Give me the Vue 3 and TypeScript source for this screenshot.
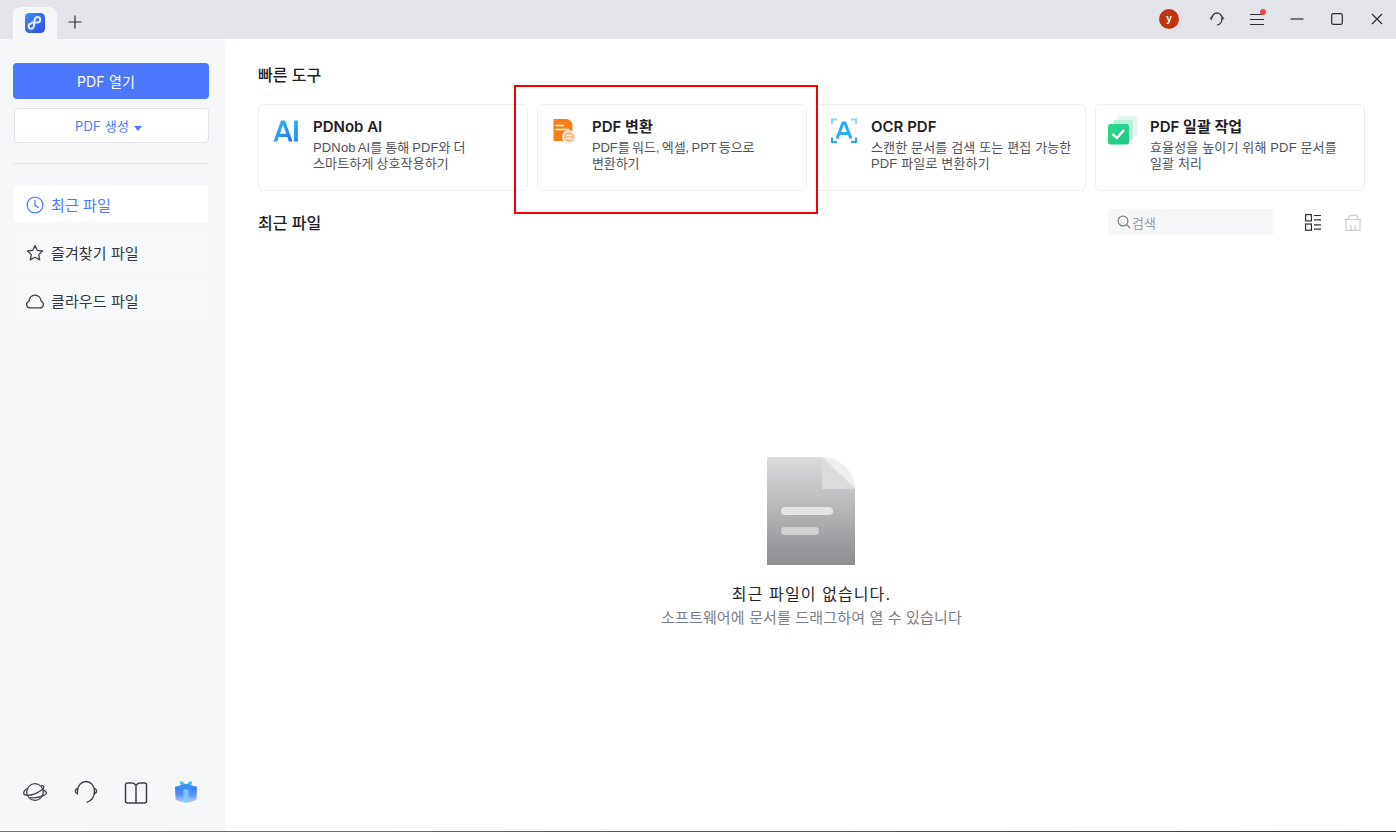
<script setup lang="ts">
interface Tool { title: string; lines: string[]; key: string }
const tools: Tool[] = [
  { key: 'ai', title: 'PDNob AI', lines: ['PDNob AI를 통해 PDF와 더', '스마트하게 상호작용하기'] },
  { key: 'convert', title: 'PDF 변환', lines: ['PDF를 워드, 엑셀, PPT 등으로', '변환하기'] },
  { key: 'ocr', title: 'OCR PDF', lines: ['스캔한 문서를 검색 또는 편집 가능한', 'PDF 파일로 변환하기'] },
  { key: 'batch', title: 'PDF 일괄 작업', lines: ['효율성을 높이기 위해 PDF 문서를', '일괄 처리'] },
]
</script>

<template>
  <div class="app">
    <header class="titlebar">
      <div class="tab">
        <svg width="20" height="20" viewBox="0 0 20 20">
          <defs>
            <linearGradient id="lg" x1="0" y1="0" x2="1" y2="1">
              <stop offset="0" stop-color="#3f8cf8" />
              <stop offset="1" stop-color="#2b4fe0" />
            </linearGradient>
          </defs>
          <rect width="20" height="20" rx="4.5" fill="url(#lg)" />
          <path d="M7 9.5H12.500a2.700 2.700 0 0 0 0-5.400C10.500 4.100 9.800 5.500 9.500 7.500L9 12.500C8.800 14.500 8 15.800 6.300 15.800a2.700 2.700 0 0 1 0-5.400" fill="none" stroke="#e6ecff" stroke-width="2" stroke-linecap="round" />
        </svg>
      </div>
      <svg class="plus" width="14" height="14" viewBox="0 0 14 14"><path d="M7 0.5V13.500M0.500 7H13.500" stroke="#2b2e36" stroke-width="1.200" /></svg>
      <div class="spacer"></div>
      <div class="avatar">y</div>
      <svg class="tb-support" width="16" height="16" viewBox="0 0 16 16" fill="none" stroke="#3a3d45" stroke-width="1.300">
        <path d="M3 7a5 5 0 0 1 10 0" />
        <path d="M13 7c0 4-1.500 6.500-4.800 7" />
        <path d="M2.700 5.500 1 7.300 2.700 9ZM13.300 5.500 15 7.300 13.300 9Z" fill="#3a3d45" stroke-width="0.600" />
      </svg>
      <div class="menu-wrap">
        <svg width="14" height="14" viewBox="0 0 14 14" stroke="#2b2e36" stroke-width="1.100"><path d="M0 2.500H14M0 7.500H14M0 12.500H14" /></svg>
        <span class="dot"></span>
      </div>
      <svg class="win w1" width="14" height="14" viewBox="0 0 14 14"><path d="M0.500 7H13.500" stroke="#2b2e36" stroke-width="1.200" /></svg>
      <svg class="win w2" width="12" height="12" viewBox="0 0 12 12"><rect x="0.700" y="0.700" width="10.600" height="10.600" rx="1.500" fill="none" stroke="#2b2e36" stroke-width="1.200" /></svg>
      <svg class="win w3" width="12" height="12" viewBox="0 0 12 12"><path d="M1 1 11 11M11 1 1 11" stroke="#2b2e36" stroke-width="1.200" /></svg>
    </header>

    <div class="body">
      <aside class="sidebar">
        <button class="btn-open">PDF 열기</button>
        <button class="btn-create">PDF 생성 <i class="caret"></i></button>
        <div class="divider"></div>
        <nav class="nav">
          <a class="nav-item active">
            <svg width="18" height="18" viewBox="0 0 18 18" fill="none" stroke="#4d7bff" stroke-width="1.300"><circle cx="9" cy="9" r="7.900" /><path d="M9 4.500V9.300L12.200 11.400" stroke-linecap="round" /></svg>
            <span>최근 파일</span>
          </a>
          <a class="nav-item">
            <svg width="18" height="18" viewBox="0 0 18 18" fill="none" stroke="#3f424a" stroke-width="1.300" stroke-linejoin="round"><path d="M9 1.600 11.200 6.300 16.500 7 12.700 10.600 13.700 15.900 9 13.300 4.300 15.900 5.300 10.600 1.500 7 6.800 6.300Z" /></svg>
            <span>즐겨찾기 파일</span>
          </a>
          <a class="nav-item">
            <svg width="18" height="18" viewBox="0 0 18 18" fill="none" stroke="#3f424a" stroke-width="1.300"><path d="M4.300 15.900H13.700a3.500 3.500 0 0 0 1.300-6.800 6 6 0 0 0-12 0 3.500 3.500 0 0 0 1.300 6.800Z" /></svg>
            <span>클라우드 파일</span>
          </a>
        </nav>
        <div class="side-foot">
          <svg width="26" height="22" viewBox="0 0 26 22" fill="none" stroke="#3f424a" stroke-width="1.300"><circle cx="13" cy="11" r="8.300" /><path d="M6 7C3 8.800 1.200 11 1.800 12.800c.7 2 5.600 2 11 0s9.800-5.400 8.900-7.400c-.3-.8-1.200-1.200-2.500-1.100" /><path d="M21 8.800c2.400 1 3.700 2.100 3.300 3.300-.6 1.900-5.600 4-10.700 4.600-2 .2-4 .2-5.300-.2" /></svg>
          <svg width="26" height="26" viewBox="0 0 26 26" fill="none" stroke="#3f424a" stroke-width="1.300"><path d="M4.500 12a8.500 9.500 0 0 1 17 0c0 6.500-3 10-8 11.500" /><path d="M4.500 9.300C3 9.800 2.300 10.800 2.300 12S3 14.300 4.500 14.800ZM21.500 9.300C23 9.800 23.700 10.800 23.700 12S23 14.300 21.500 14.800Z" /></svg>
          <svg class="book" width="24" height="22" viewBox="0 0 24 22" fill="none" stroke="#3f424a" stroke-width="1.500"><path d="M12 3.500C11 1.800 9.500 1 8 1H3.500A2 2 0 0 0 1.500 3V19A2 2 0 0 0 3.500 21H20.500A2 2 0 0 0 22.500 19V3A2 2 0 0 0 20.500 1H16C14.500 1 13 1.800 12 3.500V21" /></svg>
          <svg width="26" height="26" viewBox="0 0 26 26">
            <defs>
              <linearGradient id="gift" x1="0" y1="0" x2="0" y2="1">
                <stop offset="0" stop-color="#2472f2" />
                <stop offset="0.600" stop-color="#5f93fa" />
                <stop offset="1" stop-color="#b4cffd" />
              </linearGradient>
            </defs>
            <path d="M13 6.500C10 1.500 6.500 1 7 4.500 7.500 6.500 11 6.500 13 6.500ZM13 6.500C16 1.500 19.500 1 19 4.500 18.500 6.500 15 6.500 13 6.500Z" fill="#43c3f0" />
            <path d="M2 8 13 5 24 8 23.500 20C20 24.500 6 24.500 2.500 20Z" fill="url(#gift)" />
            <path d="M2 8 13 5 24 8 13 11Z" fill="#3a8ff5" />
            <path d="M10.500 10.500 15.500 10.500 15.500 23.500H10.500Z" fill="#7fd0fb" opacity="0.850" />
          </svg>
        </div>
      </aside>

      <main class="main">
        <h2 class="heading quick">빠른 도구</h2>
        <section class="cards">
          <article v-for="t in tools" :key="t.key" class="card" :class="'card-' + t.key">
            <div class="card-icon">
              <svg v-if="t.key === 'ai'" width="26" height="24" viewBox="0 0 26 24">
                <defs>
                  <linearGradient id="ai" x1="0" y1="0" x2="1" y2="1">
                    <stop offset="0" stop-color="#22c8ee" />
                    <stop offset="1" stop-color="#2c6df5" />
                  </linearGradient>
                </defs>
                <path d="M0.500 22.500 8 1.500H12L19.500 22.500H15.800L14.300 18H5.700L4.200 22.500ZM6.800 14.700H13.200L10 5.800Z" fill="url(#ai)" fill-rule="evenodd" />
                <rect x="21" y="1.500" width="3.800" height="21" fill="url(#ai)" />
              </svg>
              <svg v-else-if="t.key === 'convert'" width="24" height="26" viewBox="0 0 24 26">
                <path d="M0.500 0H13C16.500 0 19.500 3 19.500 6.500V22H1.500A1 1 0 0 1 0.500 21Z" fill="#fb7e14" />
                <path d="M2.500 6.500H11M2.500 10.500H16" stroke="#fff" stroke-width="1.300" />
                <circle cx="16" cy="18" r="7" fill="#ececec" />
                <circle cx="16" cy="18" r="5" fill="#f6c089" />
                <path d="M13 16.500H19M19 19.500H13" stroke="#fff" stroke-width="1.100" />
              </svg>
              <svg v-else-if="t.key === 'ocr'" width="26" height="26" viewBox="0 0 26 26" fill="none">
                <path d="M1 6V1.500H6M20 1.500H25V6" stroke="#86d8f8" stroke-width="2" />
                <path d="M1 19.500V24H6M20 24H25V19.500" stroke="#22abee" stroke-width="2" />
                <path d="M6 20.500 12 5H14L20 20.500M8 15.500H18" stroke="#29aef2" stroke-width="3" />
              </svg>
              <svg v-else width="30" height="30" viewBox="0 0 30 30">
                <defs>
                  <linearGradient id="chk" x1="0" y1="0" x2="1" y2="1">
                    <stop offset="0" stop-color="#2bdc93" />
                    <stop offset="1" stop-color="#1fc47f" />
                  </linearGradient>
                </defs>
                <rect x="9" y="0" width="20" height="20" rx="2" fill="#dff7ee" />
                <rect x="5" y="4" width="20" height="20" rx="2" fill="#bdeedd" />
                <rect x="0" y="8" width="21" height="20.500" rx="2.500" fill="url(#chk)" />
                <path d="M4.500 18 8.800 22 16 14" fill="none" stroke="#fff" stroke-width="2.400" />
              </svg>
            </div>
            <div class="card-text">
              <h3>{{ t.title }}</h3>
              <p v-for="l in t.lines" :key="l">{{ l }}</p>
            </div>
          </article>
        </section>

        <div class="recent-row">
          <h2 class="heading recent">최근 파일</h2>
          <div class="spacer"></div>
          <label class="search">
            <svg width="14" height="14" viewBox="0 0 14 14" fill="none" stroke="#7c7f87" stroke-width="1.200"><circle cx="6" cy="6" r="4.900" /><path d="M9.600 9.600 13 13" /></svg>
            <span>검색</span>
          </label>
          <svg class="grid-ic" width="16" height="17" viewBox="0 0 16 17" fill="none" stroke="#2b2e36" stroke-width="1.200"><rect x="0.600" y="0.600" width="5.800" height="6.300" /><rect x="0.600" y="10" width="5.800" height="6.300" /><path d="M9 1.500H16M9 5.800H16M9 10.800H16M9 15.200H16" /></svg>
          <svg class="trash-ic" width="18" height="17" viewBox="0 0 18 17" fill="none" stroke="#ccced3" stroke-width="1.200"><path d="M0.500 5.500H17.500M2 5.500V16.400H16V5.500M4 5.500 5 2 12.500 0.800 14 5.500M7 16.400V11M11 16.400V11" /></svg>
        </div>

        <div class="empty">
          <svg width="88" height="108" viewBox="0 0 88 108">
            <defs>
              <linearGradient id="doc" x1="0" y1="0" x2="0" y2="1">
                <stop offset="0" stop-color="#dcdcdd" />
                <stop offset="1" stop-color="#8d8d92" />
              </linearGradient>
            </defs>
            <path d="M0 0H55C72 0 88 16 88 32V108H0Z" fill="url(#doc)" />
            <path d="M55 0C72 0 88 16 88 32Z" fill="#eeeeef" />
            <path d="M55 0 88 32H55Z" fill="#dbdbdc" />
            <rect x="14" y="50" width="52" height="8" rx="4" fill="#e4e4e6" />
            <rect x="14" y="70" width="38" height="8" rx="4" fill="#d2d2d5" />
          </svg>
          <p class="empty-title">최근 파일이 없습니다.</p>
          <p class="empty-sub">소프트웨어에 문서를 드래그하여 열 수 있습니다</p>
        </div>
      </main>
    </div>
    <div class="edge"></div>
    <div class="highlight"></div>
  </div>
</template>

<style>
html, body { margin: 0; background: #fff; overflow: hidden; }
</style>

<style scoped>
.app {
  position: relative;
  width: 1396px;
  height: 832px;
  display: flex;
  flex-direction: column;
  font-family: Inter, "Noto Sans CJK KR", "Noto Sans", sans-serif;
  color: #24262c;
  overflow: hidden;
}
.edge {
  height: 1px;
  flex: none;
  background: linear-gradient(90deg, #0f96c4 0%, #0f7aa5 50%, #083f80 100%);
}
.titlebar {
  height: 39px;
  flex: none;
  display: flex;
  align-items: center;
  background: #e3e4e9;
  padding-left: 13px;
  box-sizing: border-box;
}
.tab {
  width: 44px;
  height: 32px;
  margin-top: 7px;
  background: #f6f7f9;
  border-radius: 8px 8px 0 0;
  display: flex;
  align-items: flex-start;
  justify-content: center;
  padding-top: 6px;
  box-sizing: border-box;
}
.plus { margin-left: 11px; margin-top: 5px; }
.spacer { flex: 1; }
.avatar {
  width: 20px;
  height: 20px;
  margin-bottom: 1px;
  border-radius: 50%;
  background: #bf3511;
  color: #fff;
  font: 700 10px/19px "Liberation Sans", sans-serif;
  text-align: center;
}
.tb-support { margin-left: 30px; margin-bottom: 1px; }
.menu-wrap { position: relative; width: 14px; height: 14px; margin-left: 25px; margin-bottom: 1px; }
.menu-wrap svg { display: block; }
.dot {
  position: absolute;
  top: -3px;
  right: -2px;
  width: 6px;
  height: 6px;
  border-radius: 50%;
  background: #f4433f;
}
.win { flex: none; margin-bottom: 1px; }
.w1 { margin-left: 26px; }
.w2 { margin-left: 27px; }
.w3 { margin-left: 28px; margin-right: 13px; }

.body { flex: 1; display: flex; min-height: 0; }
.sidebar {
  width: 225px;
  flex: none;
  background: #f6f7f9;
  padding: 24px 16px 0 13px;
  box-sizing: border-box;
  display: flex;
  flex-direction: column;
}
.btn-open {
  height: 36px;
  border: 0;
  border-radius: 4px;
  background: #4c78ff;
  color: #fff;
  font: 14px Inter, "Noto Sans CJK KR", sans-serif;
  letter-spacing: 0.2px;
  padding: 0 10px 0 0;
}
.btn-create {
  height: 35px;
  margin: 9px 0 0 1px;
  border: 1px solid #e1e3ea;
  border-radius: 4px;
  background: #fff;
  color: #4c78ff;
  font: 13px Inter, "Noto Sans CJK KR", sans-serif;
  letter-spacing: 0.2px;
  padding: 0 6px 0 0;
}
.caret {
  display: inline-block;
  width: 0;
  height: 0;
  margin-left: 1px;
  vertical-align: 0;
  border-left: 4px solid transparent;
  border-right: 4px solid transparent;
  border-top: 5px solid #4c78ff;
}
.divider { height: 1px; background: #e3e4e9; margin-top: 20px; }
.nav { margin: 21px 1px 0; display: flex; flex-direction: column; gap: 10px; }
.nav-item {
  height: 38px;
  border-radius: 4px;
  background: #f8f9fb;
  display: flex;
  align-items: center;
  gap: 7px;
  padding-left: 12px;
  font-size: 15px;
  letter-spacing: 0.1px;
  color: #33363d;
}
.nav-item svg { margin-top: 2px; }
.nav-item.active { background: #fff; color: #4c78ff; }
.side-foot {
  margin-top: auto;
  margin-bottom: 25px;
  display: flex;
  align-items: center;
  height: 28px;
  padding-left: 9px;
  gap: 25px;
}
.book { margin-top: 1px; }
.main { flex: 1; padding: 26px 31px 0 33px; display: flex; flex-direction: column; min-width: 0; }
.heading { margin: 0; font-size: 16px; line-height: 20px; font-weight: 500; color: #1d1f24; }
.heading.recent { padding-top: 2px; }
.cards { margin-top: 19px; display: grid; grid-template-columns: repeat(4, 270px); gap: 9px; }
.card {
  height: 87px;
  box-sizing: border-box;
  border: 1px solid #eeeff1;
  border-radius: 5px;
  display: flex;
  padding: 12px 8px 0 14px;
  background: #fff;
}
.card-icon { width: 40px; flex: none; padding-top: 2px; }
.card-icon svg { display: block; }
.card-convert .card-icon { padding-left: 1px; width: 39px; }
.card-ocr .card-icon { padding-top: 1px; }
.card-batch .card-icon { margin-left: -2px; margin-top: -1px; width: 42px; padding-top: 0; }
.card-text h3 { margin: 0 0 3px; font-size: 15px; line-height: 20px; font-weight: 600; color: #1f2127; }
.card-text p {
  margin: 0;
  font-family: "Liberation Sans", "Noto Sans CJK KR", sans-serif;
  font-size: 13px;
  line-height: 16px;
  letter-spacing: 0.15px;
  color: #50535b;
  white-space: nowrap;
}
.card-ai .card-text p { word-spacing: -1px; }
.card-convert .card-text p { word-spacing: -1px; letter-spacing: -0.100px; }
.recent-row { margin-top: 18px; height: 26px; display: flex; align-items: center; }
.search {
  width: 166px;
  height: 26px;
  border-radius: 3px;
  background: #f6f7f9;
  display: flex;
  align-items: center;
  gap: 1px;
  padding-left: 9px;
  box-sizing: border-box;
  font-size: 13px;
  color: #9a9ca3;
}
.grid-ic { margin-left: 31px; }
.trash-ic { margin-left: 23px; margin-right: 3px; }
.empty { display: flex; flex-direction: column; align-items: center; margin-top: 222px; margin-left: -2px; }
.empty svg { display: block; }
.empty-title { margin: 18px 0 0 2px; font-size: 16px; line-height: 22px; letter-spacing: 1.100px; color: #24262c; }
.empty-sub { margin: 3px 0 0 2px; font-size: 15px; line-height: 20px; letter-spacing: 0.150px; color: #7b7e85; }
.highlight {
  position: absolute;
  left: 514px;
  top: 85px;
  width: 304px;
  height: 129px;
  box-sizing: border-box;
  border: 2px solid #f00000;
  pointer-events: none;
}
</style>
